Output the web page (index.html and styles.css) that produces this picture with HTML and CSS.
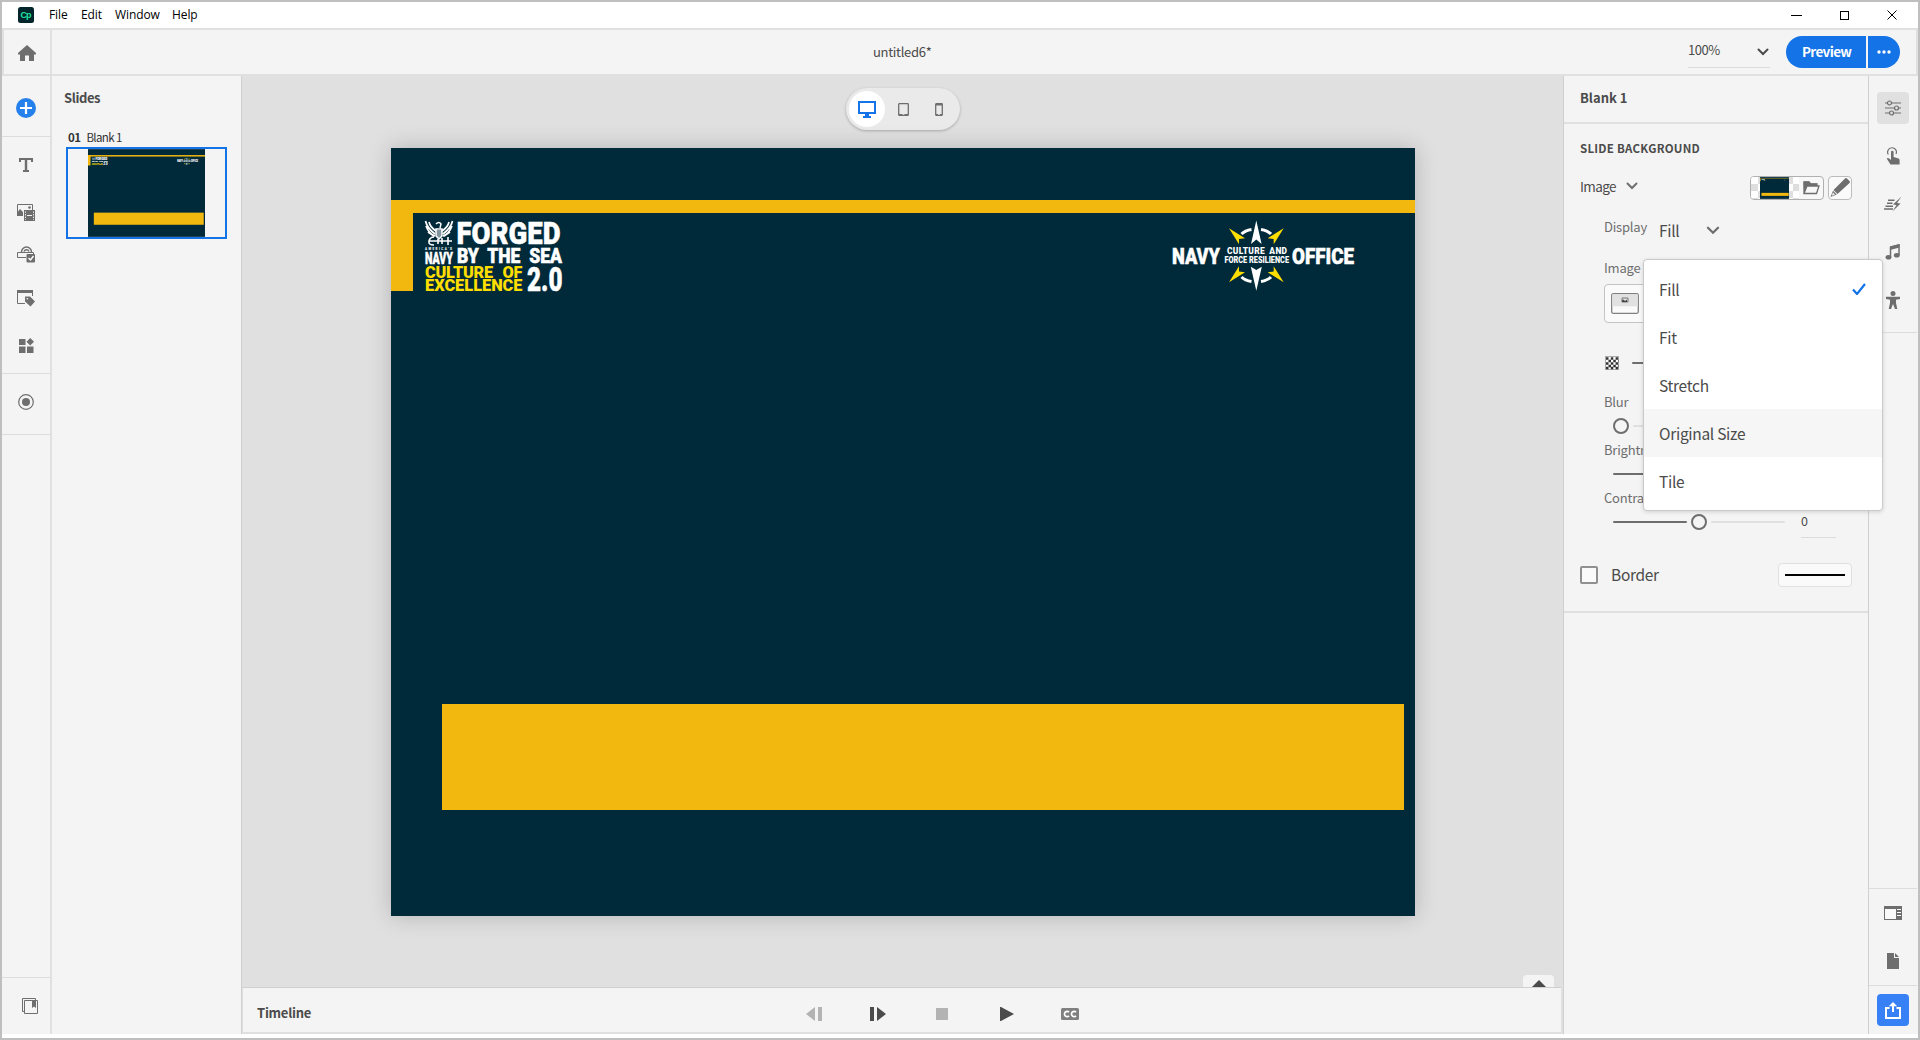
FILE: index.html
```html
<!DOCTYPE html>
<html lang="en">
<head>
<meta charset="utf-8">
<title>untitled6*</title>
<link rel="stylesheet" href="styles.css">
</head>
<body>
<svg width="0" height="0" class="defs">
  <symbol id="slide" viewBox="0 0 1024 768">
    <rect width="1024" height="768" fill="#002a3a"/>
    <rect y="52" width="1024" height="13" fill="#f2b80f"/>
    <rect y="52" width="22" height="91" fill="#f2b80f"/>
    <rect x="51" y="556" width="962" height="106" fill="#f2b80f"/>
    <g fill="none" stroke="#fff">
      <path d="M34.500 73Q36 80 44 86M38 74Q39 79 45 83M61.500 73Q60 80 52 86M58 74Q57 79 51 83M35 78Q38 86 44 88M61 78Q58 86 52 88M37 84l6 4M59 84l-6 4" stroke-width="1.700"/>
      <path d="M45 76q3-3 5 0l-1 4M45 81h6v7l-3 3-3-3z" stroke-width="1.500"/>
      <path d="M46 82v7M48 82v8M50 82v7" stroke-width="1"/>
      <path d="M43 89q-4 0-5 4t5 4M38 93h23M57 89v8M47 91v5M51 90v6" stroke-width="1.600"/>
    </g>
    <g class="art" fill="#fff" stroke="#fff" stroke-width=".5">
      <text x="65.500" y="96" font-size="32" textLength="104" lengthAdjust="spacingAndGlyphs">FORGED</text>
      <text x="66" y="115" font-size="19.500" textLength="105" lengthAdjust="spacingAndGlyphs" word-spacing="5">BY THE SEA</text>
      <text x="34" y="115.500" font-size="17" textLength="28" lengthAdjust="spacingAndGlyphs">NAVY</text>
      <text x="136" y="143" font-size="34" textLength="35.500" lengthAdjust="spacingAndGlyphs">2.0</text>
      <text x="781" y="116" font-size="22.500" textLength="48" lengthAdjust="spacingAndGlyphs">NAVY</text>
      <text x="901" y="116" font-size="22.500" textLength="62" lengthAdjust="spacingAndGlyphs">OFFICE</text>
    </g>
    <g class="art" fill="#fff">
      <text x="34" y="102.300" font-size="3" textLength="27">AMERICA’S</text>
      <text x="836" y="106.300" font-size="8.400" textLength="60" word-spacing="2">CULTURE AND</text>
      <text x="833.500" y="115" font-size="8.400" textLength="64.500" lengthAdjust="spacingAndGlyphs">FORCE RESILIENCE</text>
    </g>
    <g class="art" fill="#fedd00">
      <text x="34" y="130" font-size="16.300" textLength="97.500" word-spacing="6">CULTURE OF</text>
      <text x="34" y="143" font-size="16.300" textLength="97.500" lengthAdjust="spacingAndGlyphs">EXCELLENCE</text>
      <path d="M838 80.300 854 90.300 848 91 848 96.300zM892.700 80.300 876.700 90.300 882.700 91 882.700 96.300zM838 134.300 854 124.300 848 123.500 848 118.300zM892.700 134.300 876.700 124.300 882.700 123.500 882.700 118.300z"/>
    </g>
    <path d="M865.300 72.500 870.600 96 865.300 91.500 860 96zM865.300 142.700 870.800 118.700 865.300 122 859.800 118.700z" fill="#fff"/>
    <path d="M850.500 86Q854 82.500 860.500 81.500M880 86Q876.500 82.500 870 81.500M850.500 129Q854 132.500 860.500 133.500M880 129Q876.500 132.500 870 133.500" fill="none" stroke="#fff" stroke-width="3"/>
  </symbol>
  <symbol id="chev" viewBox="0 0 12 8"><path d="M1.500 1.500 6 6l4.500-4.500" fill="none" stroke="currentColor" stroke-width="2" stroke-linecap="round"/></symbol>
</svg>

<div class="window">
  <header class="titlebar">
    <svg class="logo" width="16" height="16" viewBox="0 0 16 16"><rect width="16" height="16" rx="2.500" fill="#00262b"/><text x="2.600" y="11.300" font-size="9" font-weight="700" textLength="11" fill="#1fe0a0">Cp</text></svg>
    <nav class="menubar"><span class="m-file">File</span><span class="m-edit">Edit</span><span class="m-window">Window</span><span>Help</span></nav>
    <div class="winbtns">
      <svg width="11" height="11"><path d="M0 5.500h11" stroke="#000"/></svg>
      <svg width="9" height="9"><rect x=".5" y=".5" width="8" height="8" fill="none" stroke="#000"/></svg>
      <svg width="10" height="10"><path d="M.5.500l9 9M9.500.500l-9 9" stroke="#000"/></svg>
    </div>
  </header>

  <div class="toolbar">
    <div class="home"><svg width="18" height="16" viewBox="0 0 18 16"><path d="M9 0 18 8v1.500h-2V16h-5v-5.500H7V16H2V9.500H0V8z" fill="#6e6e6e"/></svg></div>
    <div class="doc">untitled6*</div>
    <div class="actions">
      <div class="zoom"><span>100%</span><svg width="12" height="8"><use href="#chev"/></svg></div>
      <div class="preview">Preview</div>
      <div class="more"><svg width="14" height="4"><g fill="#fff"><circle cx="2" cy="2" r="1.700"/><circle cx="7" cy="2" r="1.700"/><circle cx="12" cy="2" r="1.700"/></g></svg></div>
    </div>
  </div>

  <div class="body">
    <aside class="tools">
      <div class="cell c-add"><svg width="20" height="20"><circle cx="10" cy="10" r="10" fill="#2680eb"/><path d="M10 4v12M4 10h12" stroke="#fff" stroke-width="2.200"/></svg></div>
      <div class="group">
        <div class="cell c-text"><svg width="14" height="14"><path d="M0 0h14v4h-2V2H8.200v10H10v2H4v-2h1.800V2H2v2H0z" fill="#6e6e6e"/></svg></div>
        <div class="cell c-media"><svg width="18" height="18"><path d="M.5 12V.5h15V6" fill="none" stroke="#6e6e6e"/><path d="M0 12V9l3-4 3 3v4z" fill="#6e6e6e"/><circle cx="12.500" cy="3.500" r="1.300" fill="#6e6e6e"/><rect x="7" y="6" width="11" height="11" fill="#6e6e6e"/><path d="M10 11.500h5" stroke="#f4f4f4"/><path d="M8.500 7.500v8.500M16.500 7.500v8.500" stroke="#f4f4f4" stroke-dasharray="1.300 1.300"/></svg></div>
        <div class="cell c-form"><svg width="18" height="18"><path d="M4.500 7a5 5 0 0 1 10 0M7 6.500a2.700 2.700 0 0 1 5 0" fill="none" stroke="#6e6e6e" stroke-width="1.400"/><path d="M9 12.500H.5v-5h16V9" fill="none" stroke="#6e6e6e"/><rect x="9.500" y="9" width="8.500" height="8.500" rx="1" fill="#6e6e6e"/><path d="M11.500 13l2 2 3-4" fill="none" stroke="#fff" stroke-width="1.400"/></svg></div>
        <div class="cell c-inter"><svg width="18" height="17"><path d="M8 13.500H.5V.5h15V6" fill="none" stroke="#6e6e6e"/><path d="M0 0h16v3H0z" fill="#6e6e6e"/><path d="M8 6.500h5l5 5-4.500 5L8 11.500z" fill="#6e6e6e"/><circle cx="10.300" cy="8.800" r=".8" fill="#fff"/></svg></div>
        <div class="cell c-widget"><svg width="15" height="15"><path d="M0 1h6.500v6H0zM0 8.500h6.500V15H0zM8 8.500h6.500V15H8zM11.200 0 15 3.800l-3.800 3.700-3.700-3.700z" fill="#6e6e6e"/></svg></div>
      </div>
      <div class="cell c-rec"><svg width="16" height="16"><circle cx="8" cy="8" r="7.300" fill="none" stroke="#6e6e6e" stroke-width="1.200"/><circle cx="8" cy="8" r="4" fill="#6e6e6e"/></svg></div>
      <div class="cell c-lib"><svg width="16" height="16"><path d="M2 13.500H.5V.5h13V2" fill="none" stroke="#6e6e6e"/><path d="M2.500 2.500h13v13h-13z" fill="none" stroke="#6e6e6e"/><path d="M10 2.500h4V10l-2-1.500L10 10z" fill="#6e6e6e"/></svg></div>
    </aside>

    <aside class="slides">
      <h2>Slides</h2>
      <div class="slide-name"><b>01</b><span>Blank 1</span></div>
      <div class="thumb"><svg width="117" height="88"><use href="#slide"/></svg></div>
    </aside>

    <main class="center">
      <div class="stage">
        <div class="devices">
          <span class="dev on"><svg width="18" height="17"><path d="M1 1h16v11H1z" fill="none" stroke="#1473e6" stroke-width="2"/><path d="M7 12h4v3h2v2H5v-2h2z" fill="#1473e6"/></svg></span>
          <span class="dev"><svg width="11" height="13"><rect x=".7" y=".7" width="9.600" height="11.600" rx=".5" fill="none" stroke="#6e6e6e" stroke-width="1.300"/><path d="M1 11h3.500v2H1zM6.500 11H10v2H6.500z" fill="#6e6e6e"/></svg></span>
          <span class="dev"><svg width="8" height="13"><rect x=".7" y=".7" width="6.600" height="11.600" rx=".5" fill="none" stroke="#6e6e6e" stroke-width="1.300"/><path d="M1 11h2v2H1zM5 11h2v2H5zM1 1h6v1.500H1z" fill="#6e6e6e"/></svg></span>
        </div>
        <svg class="slide" width="1024" height="768"><use href="#slide"/></svg>
        <div class="tab"><svg width="14" height="7"><path d="M7 0l7 7H0z" fill="#4b4b4b"/></svg></div>
      </div>
      <footer class="timeline">
        <h2>Timeline</h2>
        <div class="play">
          <svg width="16" height="14"><path d="M9 0v14L0 7zM12 0h4v14h-4z" fill="#b3b3b3"/></svg>
          <svg width="16" height="14"><path d="M0 0h4v14H0zM7 0l9 7-9 7z" fill="#4b4b4b"/></svg>
          <svg width="12" height="12"><path d="M0 0h12v12H0z" fill="#b3b3b3"/></svg>
          <svg width="14" height="14"><path d="M0 0h1l13 7-13 7H0z" fill="#4b4b4b"/></svg>
          <svg width="18" height="12"><rect width="18" height="12" rx="1.500" fill="#808080"/><path d="M8 4.200A2.600 2.600 0 1 0 8 7.800M15 4.200A2.600 2.600 0 1 0 15 7.800" fill="none" stroke="#fff" stroke-width="1.700"/></svg>
        </div>
      </footer>
    </main>

    <aside class="props">
      <header class="p-head">Blank 1</header>
      <section class="p-body">
        <h3>SLIDE BACKGROUND</h3>
        <div class="row r-image">
          <span class="t14">Image</span><svg class="gray" width="12" height="8"><use href="#chev"/></svg>
          <div class="swatch"><div class="check"><svg width="29" height="22"><use href="#slide"/></svg></div><svg class="folder" width="17" height="14"><path d="M1 12.500 4 5h12l-2.500 7.500zM1 12V1h5l1.500 2H14v2" fill="none" stroke="#6e6e6e" stroke-width="1.300"/><path d="M.5.500h5.500L8 2.500h6V5H4L1 11z" fill="#6e6e6e"/></svg></div>
          <div class="edit"><svg width="20" height="20"><path d="M15 0.500a1.500 1.500 0 0 1 2 0l2.500 2.500a1.500 1.500 0 0 1 0 2L7.500 16 3.500 12zM3 12.800 6.800 16.500.500 19z" fill="#6e6e6e"/><path d="M3 14.500 5 16.500 1.800 17.800z" fill="#fafafa"/></svg></div>
        </div>
        <div class="row r-display"><span class="lab">Display</span><span class="t17">Fill</span><svg class="gray" width="14" height="9" viewBox="0 0 12 8"><use href="#chev"/></svg></div>
        <div class="lab l-image">Image tone</div>
        <div class="picbox"><svg width="28" height="21"><rect x=".7" y=".7" width="26.600" height="19.600" rx="1.500" fill="#fafafa" stroke="#808080" stroke-width="1.300"/><path d="M1.300 1.300h25.400v12H1.300z" fill="#e1e1e1"/><path d="M11 5h6v4h-6z" fill="none" stroke="#777"/><path d="M11 9V7.500l1.500-1L14 8l2-1.500V9z" fill="#444"/></svg></div>
        <div class="row r-opacity"><svg width="14" height="14"><rect width="14" height="14" fill="#aaa"/><rect x="1" y="1" width="12" height="12" fill="#fff"/><path d="M1 2.500h12M1 7.500h12M1 12h12" stroke="#333" stroke-width="2.500" stroke-dasharray="2.500 2.300"/><path d="M3.500 5h10M3.500 10h10" stroke="#333" stroke-width="2.500" stroke-dasharray="2.500 2.300"/></svg><i class="bar dark"></i></div>
        <div class="lab l-slider">Blur</div>
        <div class="slider s-blur"><i class="knob"></i><i class="bar light"></i></div>
        <div class="lab l-slider">Brightness</div>
        <div class="slider"><i class="bar dark"></i><i class="knob"></i><i class="bar light"></i></div>
        <div class="lab l-slider">Contrast</div>
        <div class="slider"><i class="bar dark"></i><i class="knob"></i><i class="bar light"></i><span class="val">0</span></div>
        <div class="row r-border"><i class="box"></i><span class="t17">Border</span><div class="line"><i></i></div></div>
      </section>
      <ul class="menu">
        <li><span>Fill</span><svg width="14" height="12"><path d="M1 6.500 5 11 13 1" fill="none" stroke="#1473e6" stroke-width="2.200"/></svg></li>
        <li><span>Fit</span></li><li><span>Stretch</span></li><li class="hover"><span>Original Size</span></li><li><span>Tile</span></li>
      </ul>
    </aside>

    <aside class="rail">
      <div class="rtop">
        <span class="rb sel"><svg width="16" height="16"><path d="M0 3h2.500m4 0H16M0 8h9.500m4 0H16M0 13h4.500m4 0H16" stroke="#6e6e6e" stroke-width="1.200"/><g fill="none" stroke="#6e6e6e" stroke-width="1.200"><circle cx="4.500" cy="3" r="2"/><circle cx="11.500" cy="8" r="2"/><circle cx="6.500" cy="13" r="2"/></g></svg></span>
        <span class="rb"><svg width="14" height="18"><path d="M2.300 7.500A4.400 4.400 0 1 1 10 7" fill="none" stroke="#6e6e6e" stroke-width="1.200"/><path d="M5 5a1.300 1.300 0 0 1 2.600 0v5l5 1.500q1 .5 1 1.500v4.500H4.500L.700 11.500q1-1.200 2.500 0L5 13z" fill="#6e6e6e"/></svg></span>
        <span class="rb"><svg width="18" height="16"><path d="M4 4.200h6.500M3 7.200h5.500M1.500 10.200H9M0 13h9" stroke="#6e6e6e" stroke-width="1.500"/><path d="M17.500.500 9 8.500l3.500.5L8.500 15.500 16.500 7.500 13 7z" fill="#6e6e6e"/></svg></span>
        <span class="rb"><svg width="16" height="16"><path d="M5.500 13V3L14 1v10" fill="none" stroke="#6e6e6e" stroke-width="1.500"/><path d="M5 2.500 14.500 0v3.500L5 6z" fill="#6e6e6e"/><ellipse cx="3.500" cy="13.300" rx="2.900" ry="2.300" fill="#6e6e6e"/><ellipse cx="11.800" cy="11.300" rx="2.900" ry="2.300" fill="#6e6e6e"/></svg></span>
        <span class="rb"><svg width="14" height="18"><circle cx="7" cy="2.500" r="2.500" fill="#6e6e6e"/><path d="M0 5.700h14V8l-4 .7V12l1.300 6H9l-2-5-2 5H2.700L4 12V8.700L0 8z" fill="#6e6e6e"/></svg></span>
      </div>
      <div class="rbot">
        <span class="rb"><svg width="18" height="14"><rect x=".5" y=".5" width="17" height="13" fill="#fafafa" stroke="#6e6e6e"/><path d="M0 0h18v3H0zM12 3h6v11h-6z" fill="#6e6e6e"/><path d="M13 3.500h4M13 6.500h4M13 9.500h4" stroke="#fff"/></svg></span>
        <span class="rb"><svg width="12" height="16"><path d="M0 0h7v5h5v11H0zM8 0l4 4H8z" fill="#6e6e6e"/></svg></span>
      </div>
      <div class="share"><span><svg width="16" height="17"><path d="M4.500 6H1v10h14V6h-3.500M8 10V3" fill="none" stroke="#fff" stroke-width="2"/><path d="M8 0l4.200 4.300H3.800z" fill="#fff"/></svg></span></div>
    </aside>
  </div>
</div>
</body>
</html>
```
FILE: styles.css
```css
* { box-sizing: border-box; margin: 0; padding: 0; }
body {
  width: 1920px; height: 1040px; overflow: hidden; background: #bfbfbf;
  font: 14px/20px "Noto Sans CJK SC", "Noto Sans", sans-serif; color: #4b4b4b;
}
svg { display: block; flex: none; }
.defs { position: absolute; }
.art text { font-family: Roboto, "Liberation Sans", sans-serif; font-weight: 900; }
.window { display: flex; flex-direction: column; width: 1916px; height: 1036px; margin: 2px; background: #fff; }

.titlebar { display: flex; height: 26px; align-items: center; padding: 0 21px 0 16px; font: 12px/16px "Open Sans", "Noto Sans", sans-serif; color: #000; }
.logo text { font-family: "Liberation Sans", sans-serif; }
.menubar { display: flex; margin-left: 15px; letter-spacing: -.1px; }
.m-file { width: 32px; }
.m-edit { width: 34px; }
.m-window { width: 57px; }
.winbtns { display: flex; align-items: center; gap: 38px; margin-left: auto; }

.toolbar { display: flex; height: 48px; background: #f4f4f4; border: 2px solid #e0e0e0; }
.home { width: 48px; border-right: 2px solid #e0e0e0; display: flex; align-items: center; justify-content: center; padding-top: 2px; }
.doc { width: 1704px; padding: 12px 0 0 821px; font-size: 13px; line-height: 20px; letter-spacing: -.3px; }
.actions { display: flex; margin-left: -68px; padding-top: 6px; }
.zoom { display: flex; justify-content: space-between; width: 82px; height: 32px; padding: 4px 1px 0 0; border-bottom: 1px solid #dcdcdc; font-size: 13px; letter-spacing: -.5px; }
.zoom svg { margin-top: 8px; }
.preview { width: 80px; height: 32px; margin-left: 16px; padding: 5px 0 0 16px; border-radius: 16px 0 0 16px; background: #1473e6; color: #fff; font-weight: 700; font-size: 13.5px; letter-spacing: -.65px; }
.more { display: flex; width: 32px; height: 32px; margin-left: 2px; align-items: center; justify-content: center; border-radius: 0 16px 16px 0; background: #1473e6; }

.body { display: flex; height: 958px; background: #f4f4f4; }
.tools { display: flex; flex-direction: column; width: 50px; border-right: 2px solid #e0e0e0; }
.cell { display: flex; align-items: center; justify-content: center; }
.c-add { height: 61px; padding-top: 3px; border-bottom: 1px solid #dcdcdc; }
.group { height: 237px; border-bottom: 1px solid #dcdcdc; }
.c-text { height: 56px; }
.c-media { height: 40px; }
.c-form { height: 42px; }
.c-inter { height: 46px; }
.c-widget { height: 48px; padding-right: 0; }
.c-rec { height: 61px; padding-bottom: 4px; border-bottom: 1px solid #dcdcdc; }
.c-lib { height: 57px; margin-top: auto; border-top: 1px solid #dcdcdc; padding-left: 8px; }

.slides { width: 190px; border-right: 1px solid #d0d0d0; }
h2 { font-size: 13px; line-height: 20px; letter-spacing: -.4px; }
.slides h2 { padding: 12px 0 0 12px; }
.slide-name { display: flex; gap: 6px; padding: 19px 0 0 16px; font-size: 11.5px; line-height: 20px; letter-spacing: -.6px; color: #323232; }
.thumb { display: flex; justify-content: center; width: 161px; height: 92px; margin-left: 14px; border: 2px solid #1473e6; }

.center { display: flex; flex-direction: column; width: 1321px; border-left: 0; background: #e0e0e0; }
.stage { display: flex; flex-direction: column; position: relative; height: 911px; padding: 12px 0 0 149px; }
.devices { display: flex; width: 114px; height: 42px; margin-left: 455px; padding: 3px; border-radius: 21px; background: #eaeaea; box-shadow: 0 1px 3px rgba(0,0,0,.25); }
.dev { display: flex; width: 36px; height: 36px; align-items: center; justify-content: center; }
.dev.on { border-radius: 50%; background: #fff; }
.slide { margin-top: 18px; box-shadow: 0 0 22px rgba(0,0,0,.2); }
.tab { position: absolute; right: 9px; bottom: 0; display: flex; width: 31px; height: 12px; align-items: flex-end; justify-content: center; border-radius: 4px 4px 0 0; background: #f4f4f4; z-index: 1; }
.timeline { display: flex; height: 47px; align-items: center; margin-right: 2px; padding-left: 14px; background: #f4f4f4; border-top: 1px solid #d0d0d0; border-bottom: 2px solid #e0e0e0; border-left: 1px solid #e0e0e0; }
.timeline h2 { width: 549px; padding-top: 6px; letter-spacing: -.25px; }
.play { display: flex; align-items: center; padding-top: 8px; }
.play svg { margin-right: 48px; }
.play svg:nth-child(2) { margin-right: 50px; }
.play svg:nth-child(3) { margin-right: 52px; }
.play svg:nth-child(4) { margin-right: 47px; }

.props { position: relative; width: 306px; border: solid #d0d0d0; border-width: 0 1px; background: #f4f4f4; }
.p-head { height: 48px; padding: 12px 16px; font-weight: 700; font-size: 13px; border-bottom: 2px solid #e0e0e0; }
.p-body { height: 489px; padding-left: 16px; border-bottom: 2px solid #e0e0e0; }
.row { display: flex; align-items: center; }
h3 { height: 50px; font-size: 11.5px; line-height: 49px; letter-spacing: .25px; }
.gray { color: #6e6e6e; }
.r-image { height: 28px; padding-right: 16px; }
.r-image > .gray { margin: -5px 0 0 11px; }
.t14 { width: 35px; font-size: 13.5px; letter-spacing: -.6px; margin-top: -5px; }
.swatch { display: flex; align-items: center; width: 74px; height: 24px; margin-left: auto; border: 1px solid #b0b0b0; border-radius: 4px; background: #f8f8f8; overflow: hidden; }
.check { display: flex; width: 48px; height: 22px; padding-left: 9px; background: repeating-conic-gradient(#dedede 0 25%, #fff 0 50%) 0 0 / 14px 14px; }
.folder { margin-left: 4px; }
.edit { display: flex; width: 24px; height: 24px; margin-left: 4px; align-items: center; justify-content: center; border: 1px solid #bcbcbc; border-radius: 4px; background: #fafafa; }
.lab { font-size: 13px; letter-spacing: -.2px; color: #6e6e6e; }
.r-display { height: 54px; padding-left: 24px; }
.r-display .lab { width: 55px; margin-top: -4px; }
.t17 { font-size: 15.5px; letter-spacing: -.3px; line-height: 24px; }
.r-display .t17 { width: 47px; margin-top: 1px; }
.r-display .gray { margin-top: 3px; }
.l-image { height: 24px; padding-left: 24px; line-height: 23px; }
.picbox { display: flex; width: 60px; height: 39px; margin: 4px 0 0 24px; padding-left: 6px; align-items: center; border: 1px solid #c4c4c4; border-radius: 4px; background: #fafafa; }
.r-opacity { height: 40px; margin: 20px 0 7px; padding-left: 25px; }
.r-opacity .bar { margin-left: 13px; }
.bar { width: 74px; height: 2px; border-radius: 1px; }
.dark { background: #6e6e6e; }
.light { background: #e0e0e0; }
.l-slider { height: 24px; padding-left: 24px; line-height: 23px; }
.slider { display: flex; height: 24px; align-items: center; gap: 4px; padding-left: 33px; }
.s-blur .bar { width: 152px; }
.knob { width: 16px; height: 16px; border: 2px solid #6e6e6e; border-radius: 50%; }
.val { width: 35px; height: 32px; margin: 0 0 0 12px; font-size: 12.5px; line-height: 29px; border-bottom: 1px solid #dcdcdc; }
.r-border { height: 24px; margin-top: 29px; padding-right: 16px; }
.box { width: 18px; height: 18px; border: 2px solid #909090; border-radius: 2px; background: #fafafa; }
.r-border .t17 { margin: -2px 0 0 13px; }
.line { display: flex; width: 74px; height: 24px; margin-left: auto; align-items: center; justify-content: center; border: 1px solid #e0e0e0; border-radius: 4px; background: #fafafa; }
.line i { width: 60px; height: 2px; background: #000; }
.menu { position: absolute; left: 79px; top: 183px; width: 240px; height: 252px; padding: 5px 0; z-index: 2; list-style: none; font-size: 15.5px; letter-spacing: -.3px; background: #fff; border: 1px solid #cacaca; border-radius: 4px; box-shadow: 0 1px 4px rgba(0,0,0,.15); }
.menu li { display: flex; height: 48px; align-items: center; justify-content: space-between; padding: 0 16px 0 15px; }
.menu span { line-height: 24px; margin-top: -1px; }
.menu .hover { background: #f6f6f6; }

.rail { display: flex; flex-direction: column; width: 48px; background: #f4f4f4; }
.rtop { display: flex; flex-direction: column; align-items: center; gap: 16px; height: 257px; padding-top: 16px; border-bottom: 1px solid #dcdcdc; }
.rb { display: flex; width: 32px; height: 32px; align-items: center; justify-content: center; border-radius: 4px; }
.sel { background: #e0e0e0; }
.rbot { display: flex; flex-direction: column; align-items: center; gap: 16px; height: 97px; margin-top: auto; padding-top: 8px; border-top: 1px solid #dcdcdc; }
.share { display: flex; justify-content: center; height: 49px; padding-top: 8px; border-top: 1px solid #dcdcdc; }
.share span { display: flex; width: 32px; height: 32px; align-items: center; justify-content: center; border-radius: 4px; background: #3880f5; }
```
